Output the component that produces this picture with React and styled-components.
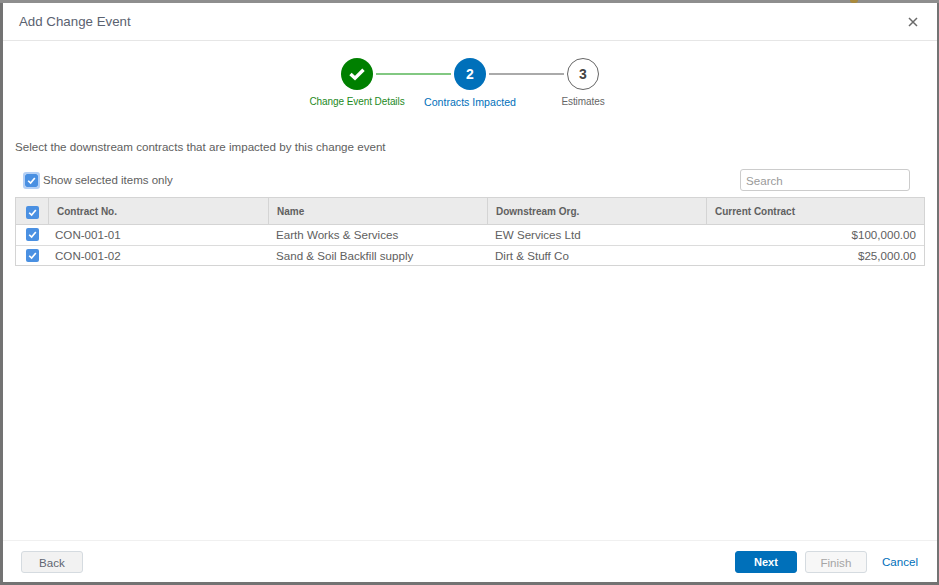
import React from "react";
import styled, { createGlobalStyle } from "styled-components";

const Global = createGlobalStyle`
	html, body { margin: 0; height: 100%; overflow: hidden; }
	body { background: #737373; font-family: "Liberation Sans", Arial, sans-serif; }
	#root { height: 100%; }
	* { box-sizing: border-box; }
`;

const Page = styled.div`
	width: 939px;
	height: 585px;
	padding: 3px 2px 3px 3px;
	display: flex;
	position: relative;
	background: linear-gradient(#8e8e8e 3px, #737373 3px);
`;

const Badge = styled.div`
	position: absolute;
	top: 0;
	left: 850px;
	width: 8px;
	height: 3px;
	border-radius: 0 0 4px 4px;
	background: #a98a3c;
`;

const Dialog = styled.div`
	flex: 1;
	background: #fff;
	display: flex;
	flex-direction: column;
`;

const Header = styled.div`
	height: 38px;
	flex: none;
	border-bottom: 1px solid #e6e6e6;
	padding: 0 19px 0 16px;
	display: flex;
	align-items: center;
	justify-content: space-between;
`;

const Title = styled.div`
	font-size: 13.3px;
	color: #5a6270;
`;

const Close = styled.svg`
	width: 10px;
	height: 10px;
	stroke: #6a6a6a;
	stroke-width: 1.5;
	fill: none;
`;

const Body = styled.div`
	flex: 1;
	padding: 0 12px;
	min-height: 0;
`;

const Stepper = styled.div`
	display: flex;
	justify-content: center;
	padding: 17px 0 0 0;
	height: 91px;
`;

const Step = styled.div`
	width: 113px;
	display: flex;
	flex-direction: column;
	align-items: center;
	position: relative;
`;

const Circle = styled.div`
	width: 32px;
	height: 32px;
	border-radius: 50%;
	background: ${p => p.$bg};
	border: ${p => p.$outlined ? "1px solid #666" : "none"};
	color: ${p => p.$outlined ? "#444" : "#fff"};
	font-size: 14px;
	font-weight: 700;
	display: flex;
	align-items: center;
	justify-content: center;
`;

const Connector = styled.div`
	position: absolute;
	top: 15px;
	left: 75px;
	width: 75px;
	height: 2px;
	background: ${p => p.$color};
`;

const StepLabel = styled.div`
	margin-top: 6px;
	font-size: ${p => p.$active ? "10.6px" : "10px"};
	letter-spacing: ${p => p.$active ? "0" : "-0.08px"};
	white-space: nowrap;
	color: ${p => p.$color};
`;

const Intro = styled.div`
	font-size: 11.6px;
	line-height: 14px;
	color: #606060;
	margin-top: 8px;
`;

const Toolbar = styled.div`
	height: 24px;
	margin-top: 14px;
	display: flex;
	align-items: center;
	justify-content: space-between;
	padding: 0 15px 0 8px;
`;

const ShowSelected = styled.label`
	display: flex;
	align-items: center;
	gap: 3px;
	font-size: 11.5px;
	color: #606060;
`;

const Focus = styled.span`
	width: 17px;
	height: 17px;
	border: 2px solid #b3cff5;
	border-radius: 3px;
	display: flex;
	align-items: center;
	justify-content: center;
`;

const CheckBox = styled.span`
	width: 13px;
	height: 13px;
	flex: none;
	border-radius: 2px;
	background: #4a90e2;
	display: inline-flex;
	align-items: center;
	justify-content: center;

	svg {
		width: 11px;
		height: 11px;
		fill: none;
		stroke: #fff;
		stroke-width: 1.5;
	}
`;

const Search = styled.input`
	width: 170px;
	height: 22px;
	border: 1px solid #ccc;
	border-radius: 3px;
	padding: 0 5px;
	font: 11.6px "Liberation Sans", Arial, sans-serif;
	outline: none;

	&::placeholder { color: #9a9a9a; opacity: 1; }
`;

const Table = styled.div`
	margin-top: 5px;
	width: 910px;
	border: 1px solid #d4d4d4;
`;

const Row = styled.div`
	display: grid;
	grid-template-columns: 32px 220px 219px 219px 1fr;
	height: ${p => p.$head ? "27px" : "20px"};
	background: ${p => p.$head ? "#ebebeb" : "#fff"};
	border-top: ${p => p.$first ? "none" : "1px solid #dcdcdc"};
	${p => p.$head && "border-bottom: 1px solid #d4d4d4;"}
`;

const Cell = styled.div`
	display: flex;
	align-items: center;
	padding: 0 8px 1px ${p => p.$tight ? 7 : 8}px;
	font-size: 11.6px;
	color: #606060;
	white-space: nowrap;
	justify-content: ${p => p.$right ? "flex-end" : "flex-start"};
`;

const HeadCell = styled(Cell)`
	font-size: 10px;
	font-weight: 700;
	padding: 0 8px;
	border-left: 1px solid #d4d4d4;
`;

const CheckCell = styled(Cell)`
	padding: ${p => p.$head ? "2px 0 0 10px" : "0 0 1px 10px"};
`;

const Footer = styled.div`
	height: 42px;
	flex: none;
	border-top: 1px solid #f0f0f0;
	padding: 10px 19px 0 18px;
	display: flex;
	align-items: flex-start;
`;

const Button = styled.button`
	width: 62px;
	height: 22px;
	margin-right: ${p => p.$gap || 0}px;
	border-radius: 3px;
	font: ${p => p.$primary ? "700 11px" : "400 11.6px"} "Liberation Sans", Arial, sans-serif;
	background: ${p => p.$primary ? "#0070ba" : p.$disabled ? "#f7f7f7" : "#f2f2f2"};
	color: ${p => p.$primary ? "#fff" : p.$disabled ? "#a5a5a5" : "#5f6672"};
	border: 1px solid ${p => p.$primary ? "#0070ba" : "#d5dbe0"};
	padding: 0;
`;

const Spacer = styled.div`
	flex: 1;
`;

const Cancel = styled.a`
	font-size: 11.6px;
	line-height: 22px;
	color: #0070ba;
	margin-left: 15px;
`;

const Tick = () => (
	<svg viewBox="0 0 10 10"><path d="M2 5.2 L4.2 7.4 L8 2.8" /></svg>
);

const Box = () => <CheckBox><Tick /></CheckBox>;

const contracts = [
	["CON-001-01", "Earth Works & Services", "EW Services Ltd", "$100,000.00"],
	["CON-001-02", "Sand & Soil Backfill supply", "Dirt & Stuff Co", "$25,000.00"],
];

export default function App() {
	return (
		<Page>
			<Global />
			<Badge />
			<Dialog>
				<Header>
					<Title>Add Change Event</Title>
					<Close viewBox="0 0 10 10"><path d="M1 1 L9 9 M9 1 L1 9" /></Close>
				</Header>
				<Body>
					<Stepper>
						<Step>
							<Circle $bg="#008000">
								<svg width="18" height="14" viewBox="0 0 18 14">
									<path d="M2.5 7 L7 11.2 L15.5 2.8" fill="none" stroke="#fff" strokeWidth="3.4" />
								</svg>
							</Circle>
							<Connector $color="#82c882" />
							<StepLabel $color="#1d8a1d">Change Event Details</StepLabel>
						</Step>
						<Step>
							<Circle $bg="#0070ba">2</Circle>
							<Connector $color="#aaa" />
							<StepLabel $active $color="#0070ba">Contracts Impacted</StepLabel>
						</Step>
						<Step>
							<Circle $bg="#fff" $outlined>3</Circle>
							<StepLabel $color="#666">Estimates</StepLabel>
						</Step>
					</Stepper>
					<Intro>Select the downstream contracts that are impacted by this change event</Intro>
					<Toolbar>
						<ShowSelected>
							<Focus><Box /></Focus>
							Show selected items only
						</ShowSelected>
						<Search placeholder="Search" />
					</Toolbar>
					<Table>
						<Row $head $first>
							<CheckCell $head><Box /></CheckCell>
							<HeadCell>Contract No.</HeadCell>
							<HeadCell>Name</HeadCell>
							<HeadCell>Downstream Org.</HeadCell>
							<HeadCell>Current Contract</HeadCell>
						</Row>
						{contracts.map((c, i) => (
							<Row key={c[0]} $first={i === 0}>
								<CheckCell><Box /></CheckCell>
								<Cell $tight>{c[0]}</Cell>
								<Cell>{c[1]}</Cell>
								<Cell>{c[2]}</Cell>
								<Cell $right>{c[3]}</Cell>
							</Row>
						))}
					</Table>
				</Body>
				<Footer>
					<Button>Back</Button>
					<Spacer />
					<Button $primary $gap={8}>Next</Button>
					<Button $disabled>Finish</Button>
					<Cancel>Cancel</Cancel>
				</Footer>
			</Dialog>
		</Page>
	);
}
